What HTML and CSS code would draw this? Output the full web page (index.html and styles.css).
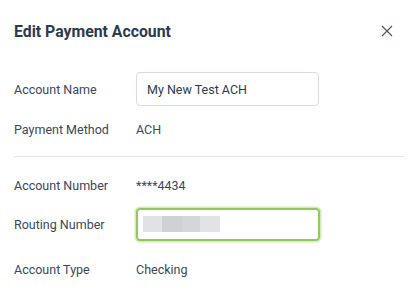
FILE: index.html
```html
<!DOCTYPE html>
<html lang="en">

<head>
    <meta charset="utf-8">
    <title>Edit Payment Account</title>
    <link rel="stylesheet" href="styles.css">
</head>

<body>

    <div class="modal">
        <header class="modalHeader">
            <h1 class="titel">Edit Payment Account</h1>
            <button class="luk" aria-label="Close">
                <svg width="12" height="12" viewBox="0 0 12 12">
                    <path d="M1 1 L11 11 M11 1 L1 11" stroke="#4a5568" stroke-width="1.2" fill="none" />
                </svg>
            </button>
        </header>

        <div class="felter">
            <div class="raekke input-raekke">
                <span class="label">Account Name</span>
                <input class="felt" type="text" value="My New Test ACH">
            </div>
            <div class="raekke tekst-raekke r2">
                <span class="label">Payment Method</span>
                <span class="vaerdi">ACH</span>
            </div>

            <hr class="skille">

            <div class="raekke tekst-raekke r3">
                <span class="label">Account Number</span>
                <span class="vaerdi">****4434</span>
            </div>
            <div class="raekke input-raekke r4">
                <span class="label">Routing Number</span>
                <div class="felt aktiv">
                    <span class="sloer">
                        <i class="b1"></i><i class="b2"></i><i class="b3"></i><i class="b4"></i>
                    </span>
                </div>
            </div>
            <div class="raekke tekst-raekke r5">
                <span class="label">Account Type</span>
                <span class="vaerdi">Checking</span>
            </div>
        </div>
    </div>

</body>

</html>
```

FILE: styles.css
```css
body {
    margin: 0;
    background-color: #fff;
    font-family: 'Roboto', 'Liberation Sans', sans-serif;
    color: #3b475a;
}

.modal {
    padding: 0 14px;
}

.modalHeader {
    height: 62px;
    display: flex;
    align-items: center;
    justify-content: space-between;
}

.titel {
    margin: 0;
    font-size: 15.8px;
    font-weight: 700;
    color: #2c3a50;
}

.luk {
    background: none;
    border: none;
    padding: 0;
    margin-right: 11px;
    width: 12px;
    height: 12px;
    display: flex;
}

.felter {
    margin-top: 10px;
}

.raekke {
    display: flex;
    align-items: center;
    font-size: 12.5px;
}

.label {
    width: 122px;
}

.input-raekke {
    height: 34px;
}

.tekst-raekke {
    height: 20px;
}

.r2 {
    margin-top: 13px;
}

.r3 {
    margin-top: 18px;
}

.r4 {
    margin-top: 12px;
}

.r5 {
    margin-top: 18px;
}

.skille {
    margin: 17px 0 0 0;
    border: none;
    border-top: 1px solid #e4e6ea;
}

.felt {
    box-sizing: border-box;
    width: 183px;
    height: 34px;
    border: 1px solid #d7dbe1;
    border-radius: 4px;
    padding: 0 10px;
    font-family: inherit;
    font-size: 12.5px;
    color: #2c3a50;
}

.aktiv {
    width: 184px;
    height: 33px;
    border: 2px solid #93c95c;
    box-shadow: 0 0 0 1.5px #d4ebbd;
    display: flex;
    align-items: center;
    padding: 0 5px;
}

.sloer {
    display: flex;
    height: 16px;
}

.sloer i {
    display: block;
    height: 16px;
}

.b1 {
    width: 19px;
    background-color: #e1e2e6;
}

.b2 {
    width: 20px;
    background-color: #d0d1d5;
}

.b3 {
    width: 18px;
    background-color: #d4d6da;
}

.b4 {
    width: 20px;
    background-color: #e2e3e7;
}
```
